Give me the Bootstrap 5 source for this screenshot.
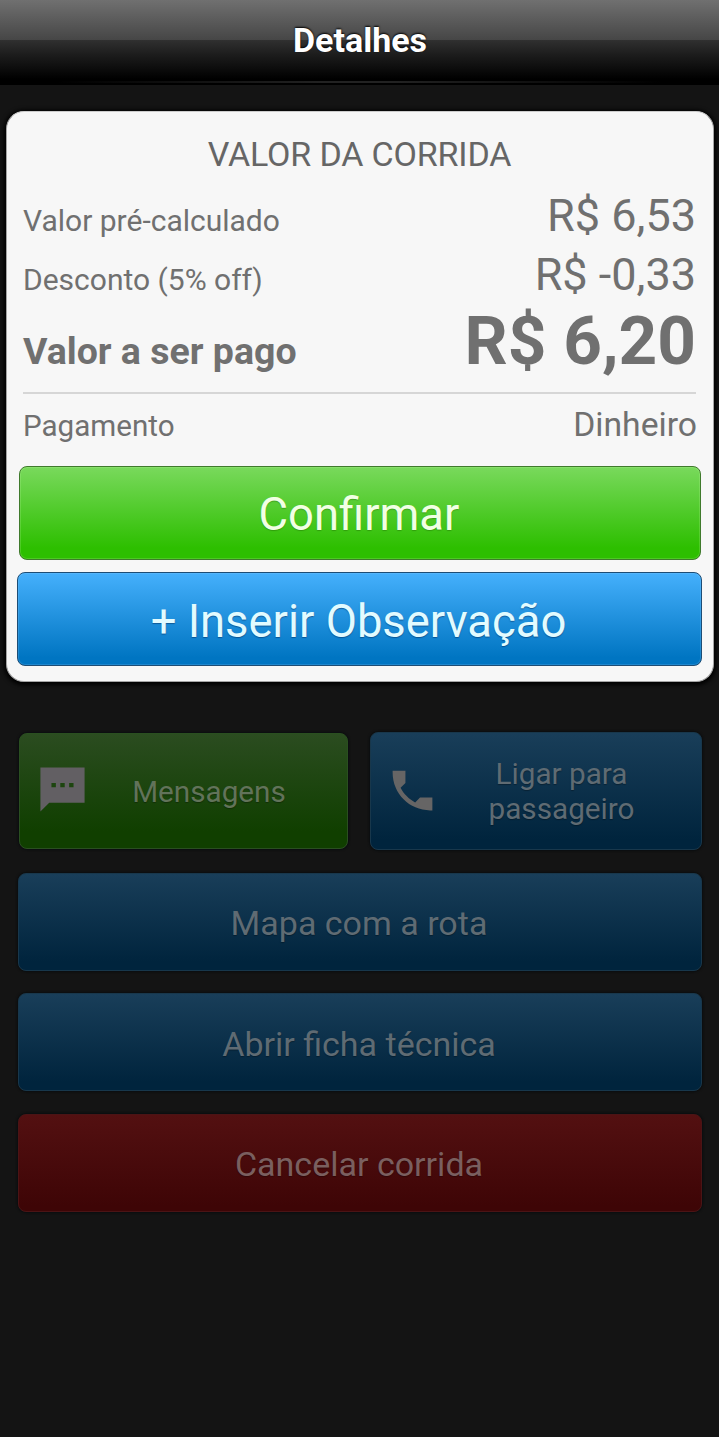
<!DOCTYPE html>
<html lang="pt-BR">
<head>
<meta charset="utf-8">
<meta name="viewport" content="width=device-width, initial-scale=1">
<title>Detalhes</title>
<link href="https://cdn.jsdelivr.net/npm/bootstrap@5.3.0/dist/css/bootstrap.min.css" rel="stylesheet">
<style>
  body { background: #141414; font-family: Roboto, sans-serif; min-height: 1437px; line-height: 1; }
  .topbar { height: 85px; padding: 0 0 4px; position: relative; background: linear-gradient(#707070 0, #464646 40px, #303030 40px, #1c1c1c 55px, #000 79px); }
  .topbar::after { content: ""; position: absolute; left: 0; right: 0; top: 81px; height: 2px; background: linear-gradient(90deg, #000 8%, #222 45%, #222 55%, #000 92%); }
  .topbar h1 { font-size: 34px; padding-left: 1px; text-shadow: 0 -1px 2px #000; }
  .fare { margin: 26px 5px 0 6px; height: 571px; padding: 20px 12px 0 11px; border: 1px solid #a5a5a5; border-top-color: #ccc; border-radius: 18px; background: #f7f7f7; color: #707070; box-shadow: 0 1px 4px 2px #000; }
  .fare h2 { font-size: 34px; line-height: 44px; color: #666; margin-bottom: 11px; letter-spacing: -.15px; }
  .line-item { margin: 0 5px; height: 59px; }
  .line-item dt { font-size: 30px; font-weight: 400; }
  .line-item dd { font-size: 45px; line-height: 58px; }
  .line-total { height: 80px; margin-top: -4px; }
  .line-total dt { font-size: 37.5px; font-weight: 700; }
  .line-total dd { font-size: 67.5px; line-height: 80px; font-weight: 700; }
  .rule { margin: 11px 5px 8px 5px; height: 2px; background: #d6d6d6; }
  .line-pay { height: 46px; margin-right: 4px; }
  .line-pay dt { font-size: 29.6px; }
  .line-pay dd { font-size: 33.7px; line-height: 46px; }
  .btn-app { border-radius: 8px; padding: 0; line-height: 1; display: flex; align-items: center; justify-content: center; }
  .btn-big { height: 94px; font-size: 45.4px; padding: 4px 2px 0 0; }
  .btn-ok { margin: 18px 0 0 1px; color: #f1ffe4; border: 1px solid #3f7a2c; background: linear-gradient(#79d95c, #2dbf00 88%); box-shadow: inset 0 0 0 1px rgba(200,255,170,.2); text-shadow: 0 1px 1px rgba(30,100,0,.4); }
  .btn-note { margin: 12px -1px 0 -1px; padding-top: 5px; color: #e2fbff; border: 1px solid #1d4d75; background: linear-gradient(#45b0fc, #0075c2 92%); box-shadow: inset 0 0 0 1px rgba(150,210,255,.2); text-shadow: 0 1px 1px rgba(0,40,90,.5); }
  .actions { margin: 50px 17px 0 18px; gap: 22.5px; }
  .btn-dim { height: 98px; font-size: 34px; padding: 3px 2px 0 0; color: #6a6f72; box-shadow: 0 0 2px 1px #0a0d0f; text-shadow: 0 1px 1px rgba(0,0,0,.3); }
  .dim-green { color: #62735a; border: 1px solid #2a4f20; background: linear-gradient(#2b4c20, #103f00 85%); }
  .dim-blue { border: 1px solid #18374b; background: linear-gradient(#193e59, #00243d 92%); color: #5f6b73; }
  .dim-red { border: 1px solid #4b1415; background: linear-gradient(#531011, #3e0506 95%); color: #7a5f5f; }
  .btn-half { font-size: 29.7px; line-height: 35px; padding-top: 0; }
  .half-msg { width: 329px; height: 116px; padding-right: 18px; margin-left: 1px; }
  .half-call { width: 332px; height: 118px; padding-right: 17px; }
  .btn-half .glyph { flex: none; width: 53px; height: 53px; margin: 0 0 1px 15px; }
  .half-msg .glyph { margin: 0 0 3px 16px; }
</style>
</head>
<body>
<header class="topbar d-flex align-items-center justify-content-center">
  <h1 class="m-0 fw-bold text-white">Detalhes</h1>
</header>

<main>
  <section class="fare">
    <h2 class="fw-normal text-center">VALOR DA CORRIDA</h2>
    <dl class="m-0">
      <div class="line-item d-flex justify-content-between align-items-baseline"><dt>Valor pré-calculado</dt><dd class="m-0">R$ 6,53</dd></div>
      <div class="line-item d-flex justify-content-between align-items-baseline"><dt>Desconto (5% off)</dt><dd class="m-0">R$ -0,33</dd></div>
      <div class="line-item line-total d-flex justify-content-between align-items-baseline"><dt>Valor a ser pago</dt><dd class="m-0">R$ 6,20</dd></div>
      <div class="rule"></div>
      <div class="line-item line-pay d-flex justify-content-between align-items-baseline"><dt>Pagamento</dt><dd class="m-0">Dinheiro</dd></div>
    </dl>
    <div class="d-flex flex-column">
      <button type="button" class="btn btn-app btn-big btn-ok">Confirmar</button>
      <button type="button" class="btn btn-app btn-big btn-note">+ Inserir Observação</button>
    </div>
  </section>

  <section class="actions d-flex flex-column">
    <div class="d-flex justify-content-between align-items-center">
      <button type="button" class="btn btn-app btn-dim btn-half half-msg dim-green">
        <svg class="glyph" viewBox="0 0 24 24" fill="#625f63"><path d="M2 2v20l4-4h16V2zm7 9H7V9h2zm4 0h-2V9h2zm4 0h-2V9h2z"/></svg>
        <span class="flex-grow-1">Mensagens</span>
      </button>
      <button type="button" class="btn btn-app btn-dim btn-half half-call dim-blue">
        <svg class="glyph" viewBox="0 0 24 24" fill="#666565"><path d="M6.6 10.8c1.4 2.8 3.8 5.1 6.6 6.6l2.2-2.2H21V21h-1C10.6 21 3 13.4 3 4V3h5.8v5.6z"/></svg>
        <span class="flex-grow-1">Ligar para<br>passageiro</span>
      </button>
    </div>
    <button type="button" class="btn btn-app btn-dim dim-blue">Mapa com a rota</button>
    <button type="button" class="btn btn-app btn-dim dim-blue">Abrir ficha técnica</button>
    <button type="button" class="btn btn-app btn-dim dim-red">Cancelar corrida</button>
  </section>
</main>
<script src="https://cdn.jsdelivr.net/npm/bootstrap@5.3.0/dist/js/bootstrap.bundle.min.js"></script>
</body>
</html>
